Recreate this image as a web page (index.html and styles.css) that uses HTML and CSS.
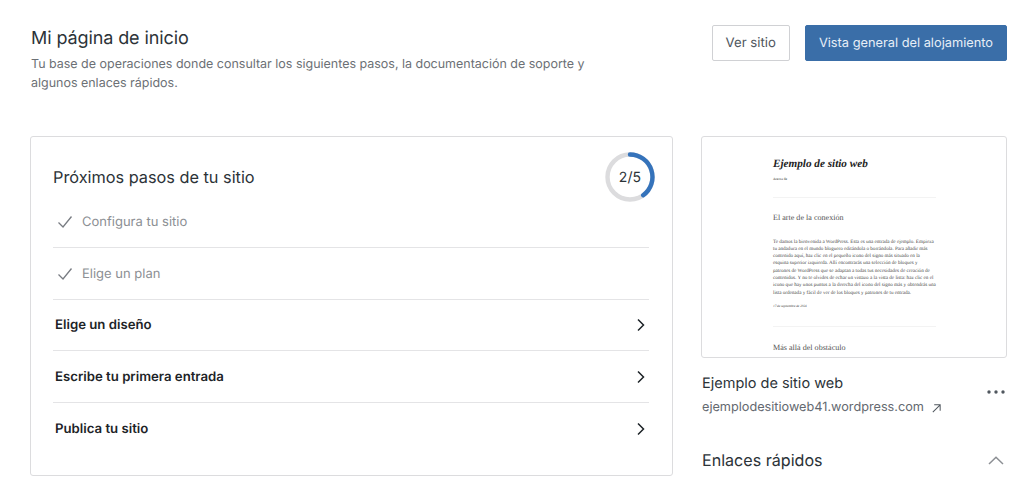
FILE: index.html
```html
<!DOCTYPE html>
<html lang="es">
<head>
<meta charset="utf-8">
<title>Mi página de inicio</title>
<link rel="stylesheet" href="styles.css">
</head>
<body>
<div class="page">
  <header class="header">
    <div class="intro">
      <h1>Mi página de inicio</h1>
      <p>Tu base de operaciones donde consultar los siguientes pasos, la documentación de soporte y algunos enlaces rápidos.</p>
    </div>
    <div class="actions">
      <a class="btn">Ver sitio</a>
      <a class="btn primary">Vista general del alojamiento</a>
    </div>
  </header>
  <main class="main">
    <section class="card steps">
      <div class="steps-head">
        <h2>Próximos pasos de tu sitio</h2>
        <div class="ring">
          <svg width="50" height="50" viewBox="0 0 50 50" aria-hidden="true">
            <circle cx="25" cy="25" r="22.5" fill="none" stroke="#dcdcde" stroke-width="4.4"/>
            <path d="M25 2.5A22.5 22.5 0 0 1 38.2 43.2" fill="none" stroke="#3573bb" stroke-width="4.4" stroke-linecap="round"/>
          </svg>
          <span>2/5</span>
        </div>
      </div>
      <ul class="list">
        <li class="done">
          <svg class="check" width="18" height="18" viewBox="0 0 18 18" aria-hidden="true"><path d="M2.5 9.5 7 14 15.5 3.5" fill="none" stroke="#787c82" stroke-width="1.3"/></svg>
          <span>Configura tu sitio</span>
        </li>
        <li class="done">
          <svg class="check" width="18" height="18" viewBox="0 0 18 18" aria-hidden="true"><path d="M2.5 9.5 7 14 15.5 3.5" fill="none" stroke="#787c82" stroke-width="1.3"/></svg>
          <span>Elige un plan</span>
        </li>
        <li class="todo">
          <span>Elige un diseño</span>
          <svg width="10" height="14" viewBox="0 0 10 14" aria-hidden="true"><path d="M2 1.5 7.5 7 2 12.5" fill="none" stroke="#1d2327" stroke-width="1.5"/></svg>
        </li>
        <li class="todo">
          <span>Escribe tu primera entrada</span>
          <svg width="10" height="14" viewBox="0 0 10 14" aria-hidden="true"><path d="M2 1.5 7.5 7 2 12.5" fill="none" stroke="#1d2327" stroke-width="1.5"/></svg>
        </li>
        <li class="todo">
          <span>Publica tu sitio</span>
          <svg width="10" height="14" viewBox="0 0 10 14" aria-hidden="true"><path d="M2 1.5 7.5 7 2 12.5" fill="none" stroke="#1d2327" stroke-width="1.5"/></svg>
        </li>
      </ul>
    </section>
    <aside class="side">
      <div class="card preview">
        <div class="shot">
          <div class="shot-title">Ejemplo de sitio web</div>
          <div class="shot-nav">Acerca de</div>
          <hr class="shot-rule">
          <div class="shot-h">El arte de la conexión</div>
          <p class="shot-p">Te damos la bienvenida a WordPress. Esta es una entrada de ejemplo. Empieza<br>tu andadura en el mundo bloguero editándola o borrándola. Para añadir más<br>contenido aquí, haz clic en el pequeño icono del signo más situado en la<br>esquina superior izquierda. Allí encontrarás una selección de bloques y<br>patrones de WordPress que se adaptan a todas tus necesidades de creación de<br>contenidos. Y no te olvides de echar un vistazo a la vista de lista: haz clic en el<br>icono que hay unos puntos a la derecha del icono del signo más y obtendrás una<br>lista ordenada y fácil de ver de los bloques y patrones de tu entrada.</p>
          <div class="shot-date">17 de septiembre de 2024</div>
          <hr class="shot-rule second">
          <div class="shot-h last">Más allá del obstáculo</div>
        </div>
      </div>
      <div class="site">
        <div>
          <div class="site-name">Ejemplo de sitio web</div>
          <div class="site-url">ejemplodesitioweb41.wordpress.com
            <svg width="11" height="11" viewBox="0 0 12 12" aria-hidden="true"><path d="M2 10 10 2M3.5 2H10V8.5" fill="none" stroke="#50575e" stroke-width="1.1"/></svg>
          </div>
        </div>
        <svg class="dots" width="18" height="4" viewBox="0 0 18 4" aria-hidden="true"><circle cx="2" cy="2" r="1.7" fill="#50575e"/><circle cx="9" cy="2" r="1.7" fill="#50575e"/><circle cx="16" cy="2" r="1.7" fill="#50575e"/></svg>
      </div>
      <div class="links">
        <h2>Enlaces rápidos</h2>
        <svg width="16" height="9" viewBox="0 0 16 9" aria-hidden="true"><path d="M1 8 8 1.2 15 8" fill="none" stroke="#8c8f94" stroke-width="1.5"/></svg>
      </div>
    </aside>
  </main>
</div>
</body>
</html>
```

FILE: styles.css
```css
* { box-sizing: border-box; }
html, body { margin: 0; height: 486px; overflow: hidden; background: #fff; }
body { font-family: Inter, "Liberation Sans", sans-serif; color: #1d2327; text-rendering: geometricPrecision; }
.page { padding: 25px 17px 0 30px; }
.header { display: flex; justify-content: space-between; align-items: flex-start; height: 111px; }
.intro { width: 575px; padding: 1px 0 0 1px; }
h1 { margin: 0; font-size: 18px; line-height: 26px; font-weight: 400; letter-spacing: -0.1px; color: #2c3338; }
.intro p { margin: 3px 0 0; font-size: 12.47px; line-height: 19px; color: #6c7075; }
.actions { display: flex; gap: 15px; }
.btn { display: flex; align-items: center; height: 36px; padding: 0 13px; border: 1px solid #d0d1d4; border-radius: 2px; font-size: 13.2px; color: #50575e; background: #fff; }
.btn.primary { padding: 0 13px; border-color: #3a6ea8; background: #3a6ea8; color: #e8eff7; font-size: 12.8px; }
.main { display: flex; align-items: flex-start; gap: 28px; }
.card { background: #fff; border: 1px solid #dcdcde; border-radius: 3px; }
.steps { width: 643px; height: 340px; padding: 15px 23px 0 22px; }
.steps-head { display: flex; justify-content: space-between; align-items: center; height: 50px; }
.steps-head h2 { margin: 0; font-size: 16.3px; font-weight: 400; color: #2c3338; }
.ring { position: relative; width: 50px; height: 50px; margin-right: -6px; display: flex; align-items: center; justify-content: center; }
.ring svg { position: absolute; inset: 0; }
.ring span { font-size: 14px; color: #2c3338; letter-spacing: 0.2px; }
.list { list-style: none; margin: 0; padding: 0; }
.list li { display: flex; align-items: center; height: 51.5px; padding-top: 1px; border-bottom: 1px solid #e4e4e6; font-size: 13px; }
.list li:first-child { height: 46px; padding-top: 0; padding-bottom: 5px; }
.list li:last-child { border-bottom: 0; }
.done { gap: 8px; padding-left: 3px; color: #8c8f94; }
.check { flex: none; }
.todo { justify-content: space-between; padding-right: 3px; padding-left: 2px; }
.list .todo { font-size: 13.2px; font-weight: 600; color: #1d2327; }
.side { width: 306px; }
.preview { height: 222px; overflow: hidden; }
.shot { width: 163px; margin-left: 71px; font-family: "Liberation Serif", serif; color: #333; }
.shot-title { margin-top: 20px; font-size: 11.2px; line-height: 14px; font-weight: 700; font-style: italic; color: #222; white-space: nowrap; }
.shot-nav { margin-top: 6px; font-size: 3.5px; line-height: 5px; }
.shot-rule { margin: 15px 0 0; border: 0; border-top: 1px solid #f3f3f3; }
.shot-rule.second { margin-top: 17px; }
.shot-h { margin-top: 14px; font-size: 8.1px; line-height: 12px; color: #555; white-space: nowrap; }
.shot-h.last { margin-top: 15px; }
.shot-p { margin: 14.5px 0 0; font-size: 5.1px; line-height: 7.33px; white-space: nowrap; color: #444; }
.shot-date { margin-top: 7px; font-size: 3.3px; line-height: 5px; font-style: italic; }
.site { display: flex; justify-content: space-between; align-items: center; padding: 0 2px 0 1px; margin-top: 16px; }
.site-name { font-size: 14.5px; line-height: 20px; color: #2c3338; }
.site-url { margin-top: 5px; font-size: 12.7px; line-height: 18px; color: #646970; display: flex; align-items: center; gap: 7px; }
.dots { margin-bottom: 8px; }
.links { display: flex; justify-content: space-between; align-items: center; padding: 0 3px 0 1px; margin-top: 31px; }
.links h2 { margin: 0; font-size: 16.1px; line-height: 24px; font-weight: 400; color: #2c3338; }
```
